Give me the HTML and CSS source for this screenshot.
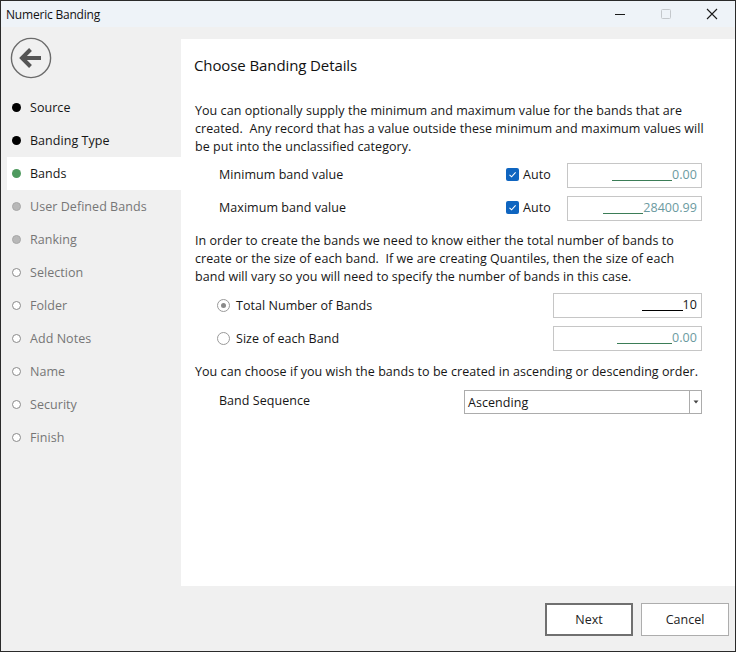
FILE: index.html
```html
<!DOCTYPE html>
<html>
<head>
<meta charset="utf-8">
<link rel="stylesheet" href="styles.css">
</head>
<body>
<div class="window">
  <div class="titlebar">
    <span class="title">Numeric Banding</span>
    <div class="controls">
      <span class="ctl"><svg width="12" height="12" viewBox="0 0 12 12"><line x1="1" y1="6.5" x2="11" y2="6.5" stroke="#1a1a1a" stroke-width="1"/></svg></span>
      <span class="ctl"><svg width="12" height="12" viewBox="0 0 12 12"><rect x="1.5" y="1.5" width="9" height="9" rx="1" fill="none" stroke="#c4c8cc" stroke-width="1"/></svg></span>
      <span class="ctl"><svg width="12" height="12" viewBox="0 0 12 12"><path d="M1 1 L11 11 M11 1 L1 11" stroke="#1a1a1a" stroke-width="1.1"/></svg></span>
    </div>
  </div>
  <div class="body">
    <aside class="sidebar">
      <div class="back">
        <svg width="42" height="42" viewBox="0 0 42 42">
          <circle cx="21" cy="21" r="19.6" fill="none" stroke="#6b6b6b" stroke-width="1.4"/>
          <path d="M31 21 H14" stroke="#555" stroke-width="4" fill="none"/>
          <path d="M20.5 12.5 L12 21 L20.5 29.5" stroke="#555" stroke-width="4" fill="none" stroke-linejoin="miter"/>
        </svg>
      </div>
      <ul class="steps">
        <li class="step done"><span class="dot"></span>Source</li>
        <li class="step done"><span class="dot"></span>Banding Type</li>
        <li class="step current"><span class="dot"></span>Bands</li>
        <li class="step skipped"><span class="dot"></span>User Defined Bands</li>
        <li class="step skipped"><span class="dot"></span>Ranking</li>
        <li class="step todo"><span class="dot"></span>Selection</li>
        <li class="step todo"><span class="dot"></span>Folder</li>
        <li class="step todo"><span class="dot"></span>Add Notes</li>
        <li class="step todo"><span class="dot"></span>Name</li>
        <li class="step todo"><span class="dot"></span>Security</li>
        <li class="step todo"><span class="dot"></span>Finish</li>
      </ul>
    </aside>
    <div class="main">
      <section class="panel">
        <h1 class="heading">Choose Banding Details</h1>
        <p class="para p1">You can optionally supply the minimum and maximum value for the bands that are<br>created.&nbsp; Any record that has a value outside these minimum and maximum values will<br>be put into the unclassified category.</p>
        <div class="form-row row-min">
          <span class="label">Minimum band value</span>
          <span class="auto"><span class="check"><svg width="9" height="9" viewBox="0 0 9 9"><path d="M1.5 4.8 L3.6 6.8 L7.6 2.4" stroke="#fff" stroke-width="1.1" fill="none"/></svg></span>Auto</span>
          <span class="box w135 disabled"><span class="mask" style="width:60px"></span>0.00</span>
        </div>
        <div class="form-row row-max">
          <span class="label">Maximum band value</span>
          <span class="auto"><span class="check"><svg width="9" height="9" viewBox="0 0 9 9"><path d="M1.5 4.8 L3.6 6.8 L7.6 2.4" stroke="#fff" stroke-width="1.1" fill="none"/></svg></span>Auto</span>
          <span class="box w135 disabled"><span class="mask" style="width:40px"></span>28400.99</span>
        </div>
        <p class="para p2">In order to create the bands we need to know either the total number of bands to<br>create or the size of each band.&nbsp; If we are creating Quantiles, then the size of each<br>band will vary so you will need to specify the number of bands in this case.</p>
        <div class="form-row row-r1">
          <span class="label radio-label"><span class="radio checked"></span>Total Number of Bands</span>
          <span class="box w149"><span class="mask dark" style="width:41px"></span>10</span>
        </div>
        <div class="form-row row-r2">
          <span class="label radio-label"><span class="radio"></span>Size of each Band</span>
          <span class="box w149 disabled"><span class="mask" style="width:55px"></span>0.00</span>
        </div>
        <p class="para p3">You can choose if you wish the bands to be created in ascending or descending order.</p>
        <div class="form-row row-sel">
          <span class="label">Band Sequence</span>
          <span class="select"><span class="sel-text">Ascending</span><span class="sel-btn"><svg width="6" height="4" viewBox="0 0 6 4"><path d="M0.5 0.5 L5.5 0.5 L3 3.5 Z" fill="#444"/></svg></span></span>
        </div>
      </section>
      <footer class="footer">
        <button class="btn primary">Next</button>
        <button class="btn">Cancel</button>
      </footer>
    </div>
  </div>
</div>
</body>
</html>
```
FILE: styles.css
```css
* { box-sizing: border-box; }
html, body { margin: 0; padding: 0; }
body {
  font-family: "Open Sans", "Noto Sans", sans-serif;
  font-size: 12.5px;
  color: #161616;
  background: #f0f0f0;
}
.window {
  width: 736px;
  height: 652px;
  border: 1px solid #2a2a2a;
  display: flex;
  flex-direction: column;
  background: #f0f0f0;
}
.titlebar {
  height: 26px;
  background: #eef3f8;
  display: flex;
  align-items: center;
  justify-content: space-between;
  flex: none;
}
.title {
  padding-left: 5px;
  font-size: 12px;
  letter-spacing: -0.2px;
  color: #111;
}
.controls { display: flex; height: 100%; }
.ctl {
  width: 46px;
  display: flex;
  align-items: center;
  justify-content: center;
}
.body {
  flex: 1;
  display: flex;
  min-height: 0;
}
.sidebar {
  width: 180px;
  flex: none;
  padding-left: 6px;
}
.back {
  height: 64px;
  padding-top: 10px;
  padding-left: 3px;
}
.steps {
  list-style: none;
  margin: 0;
  padding: 0;
}
.step {
  height: 33px;
  display: flex;
  align-items: center;
  padding-left: 5px;
  letter-spacing: 0.05px;
  color: #161616;
}
.dot {
  width: 9px;
  height: 9px;
  border-radius: 50%;
  margin-right: 9px;
  flex: none;
}
.done .dot { background: #000; }
.current { background: #fff; }
.current .dot { background: #4e9a5e; }
.skipped { color: #767676; }
.skipped .dot { background: #b8b8b8; border: 1px solid #a8a8a8; }
.todo { color: #767676; }
.todo .dot { background: #fff; border: 1px solid #8a8a8a; }
.main {
  flex: 1;
  min-width: 0;
  display: flex;
  flex-direction: column;
}
.panel {
  background: #fff;
  margin-top: 12px;
  height: 547px;
  padding: 16px 33px 0 13px;
}
.heading {
  margin: 0;
  font-weight: normal;
  font-size: 15px;
  line-height: 20px;
  letter-spacing: -0.1px;
  color: #111;
}
.para {
  margin: 0;
  line-height: 18px;
  white-space: nowrap;
  padding-left: 1px;
  letter-spacing: 0.05px;
}
.p1 { margin-top: 27px; }
.p2 { margin-top: 11px; }
.p3 { margin-top: 12px; }
.form-row {
  display: flex;
  align-items: center;
  height: 25px;
  padding-left: 25px;
  letter-spacing: 0.05px;
}
.row-min { margin-top: 7px; }
.row-max { margin-top: 8px; }
.row-r1 { margin-top: 7px; }
.row-r2 { margin-top: 8px; }
.row-sel { margin-top: 9px; height: 24px; }
.label { flex: 1; padding-bottom: 3px; }
.auto {
  width: 61px;
  display: flex;
  align-items: center;
  padding-bottom: 3px;
}
.check {
  width: 13px;
  height: 13px;
  border-radius: 2px;
  background: #0f65c0;
  display: flex;
  align-items: center;
  justify-content: center;
  margin-right: 4px;
  margin-top: 1px;
}
.box {
  height: 25px;
  border: 1px solid #c6c6c6;
  display: flex;
  align-items: flex-end;
  justify-content: flex-end;
  padding: 0 4px 5px 0;
  line-height: 14px;
}
.w135 { width: 135px; }
.w149 { width: 149px; }
.mask {
  display: inline-block;
  height: 14px;
  border-bottom: 1px solid #3b7d57;
  margin-bottom: 1px;
}
.mask.dark { border-bottom-color: #000; }
.disabled { color: #6b9aa0; }
.radio-label {
  display: flex;
  align-items: center;
  margin-left: -2px;
  padding-bottom: 1px;
}
.radio {
  width: 13px;
  height: 13px;
  border-radius: 50%;
  border: 1px solid #9a9a9a;
  background: #fff;
  margin-right: 6px;
  position: relative;
  flex: none;
}
.radio.checked::after {
  content: "";
  position: absolute;
  left: 3px;
  top: 3px;
  width: 5px;
  height: 5px;
  border-radius: 50%;
  background: #8a8a8a;
}
.select {
  width: 238px;
  height: 24px;
  border: 1px solid #acacac;
  display: flex;
  align-items: stretch;
}
.sel-text {
  flex: 1;
  display: flex;
  align-items: center;
  padding-left: 3px;
}
.sel-btn {
  width: 12px;
  border-left: 1px solid #acacac;
  display: flex;
  align-items: center;
  justify-content: center;
}
.footer {
  flex: 1;
  display: flex;
  justify-content: flex-end;
  align-items: flex-start;
  padding-top: 17px;
  padding-right: 6px;
  gap: 8px;
}
.btn {
  width: 88px;
  height: 33px;
  background: #fff;
  border: 1px solid #adadad;
  font-family: "Open Sans", "Noto Sans", sans-serif;
  font-size: 12.5px;
  color: #222;
  padding: 0;
}
.btn.primary {
  border: 2px solid #707070;
}
```
